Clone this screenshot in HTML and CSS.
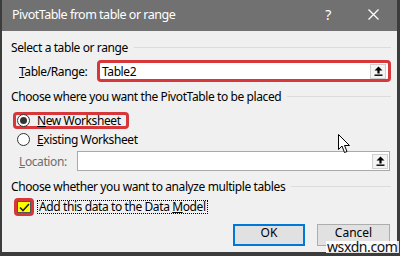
FILE: index.html
```html
<!DOCTYPE html>
<html lang="en">
  <head>
    <meta charset="UTF-8" />
    <title>PivotTable from table or range</title>
    <link rel="stylesheet" href="styles.css">
  </head>
  <body>
    <div class="dialog">
      <div class="titlebar">
        <span class="title">PivotTable from table or range</span>
        <span class="help">?</span>
        <svg class="close" width="11" height="11" viewBox="0 0 11 11">
          <path d="M0.5 0.5 L10.5 10.5 M10.5 0.5 L0.5 10.5" stroke="#fff" stroke-width="1.3" />
        </svg>
      </div>
      <div class="body">
        <div class="group-title"><span>Select a table or range</span><div class="rule"></div></div>
        <div class="row range-row">
          <label class="field-label range-label"><u>T</u>able/Range:</label>
          <div class="ref-box red-box">
            <span class="ref-text">Table2</span>
            <span class="pick-btn">
              <svg width="9" height="10" viewBox="0 0 9 10"><path d="M4.5 0.5 L8.5 4.5 L5.6 4.5 L5.6 7.5 L3.4 7.5 L3.4 4.5 L0.5 4.5 Z" fill="#000" /><rect x="0.5" y="8.5" width="8" height="1.4" fill="#000" /></svg>
            </span>
          </div>
        </div>

        <div class="group-title second"><span>Choose where you want the PivotTable to be placed</span><div class="rule"></div></div>
        <div class="row radio-row red-outline">
          <span class="radio checked"></span>
          <span><u>N</u>ew Worksheet</span>
        </div>
        <div class="row radio-row plain">
          <span class="radio"></span>
          <span><u>E</u>xisting Worksheet</span>
        </div>
        <div class="row location-row">
          <label class="field-label location-label disabled"><u>L</u>ocation:</label>
          <div class="ref-box location-box">
            <span class="pick-btn">
              <svg width="9" height="10" viewBox="0 0 9 10"><path d="M4.5 0.5 L8.5 4.5 L5.6 4.5 L5.6 7.5 L3.4 7.5 L3.4 4.5 L0.5 4.5 Z" fill="#000" /><rect x="0.5" y="8.5" width="8" height="1.4" fill="#000" /></svg>
            </span>
          </div>
        </div>

        <div class="group-title third"><span>Choose whether you want to analyze multiple tables</span><div class="rule"></div></div>
        <div class="row check-row">
          <span class="check-wrap">
            <span class="checkbox">
              <svg width="11" height="9" viewBox="0 0 11 9"><path d="M1 4.5 L4 7.5 L10 1" fill="none" stroke="#222" stroke-width="1.6" /></svg>
            </span>
          </span>
          <span class="focus-label">Add this data to the Data <u>M</u>odel</span>
        </div>

        <div class="buttons">
          <button class="btn default">OK</button>
          <button class="btn">Cancel</button>
        </div>
      </div>
    </div>

    <svg class="cursor" width="13" height="20" viewBox="0 0 13 20">
      <path d="M0.5 0.5 L0.5 15.5 L4 12 L6.5 18.5 L9 17.5 L6.5 11.5 L11.5 11.5 Z" fill="#fff" stroke="#000" stroke-width="1" />
    </svg>
    <div class="watermark">wsxdn.com</div>
  </body>
</html>
```

FILE: styles.css
```css
* {
  margin: 0;
  padding: 0;
  box-sizing: border-box;
}
body {
  width: 400px;
  height: 256px;
  background-color: #3c3c3c;
  font-family: "Noto Sans", "Open Sans", sans-serif;
  font-size: 12px;
  letter-spacing: -0.4px;
  color: #000;
  overflow: hidden;
  position: relative;
}
.dialog {
  margin: 0 3px 0 2px;
  width: 395px;
  height: 252px;
  background-color: #f0f0f0;
  display: flex;
  flex-direction: column;
}
.titlebar {
  height: 31px;
  background-color: #717171;
  color: #fff;
  display: flex;
  align-items: center;
  padding-left: 10px;
}
.title {
  font-size: 12.5px;
  letter-spacing: -0.5px;
  flex: 1;
  padding-bottom: 3px;
}
.help {
  font-size: 14px;
  margin-right: 37px;
  padding-bottom: 3px;
}
.close {
  margin-right: 18px;
  margin-bottom: 3px;
}
.body {
  padding: 0 6px 0 9px;
  flex: 1;
}
.group-title {
  display: flex;
  align-items: center;
  height: 16px;
  margin-top: 8px;
  white-space: nowrap;
}
.group-title.second {
  margin-top: 6px;
}
.group-title.third {
  margin-top: 7px;
}
.rule {
  flex: 1;
  height: 1px;
  background-color: #dcdcdc;
  margin-left: 6px;
}
.row {
  display: flex;
  align-items: center;
}
.field-label {
  padding-left: 8px;
}
.range-label {
  width: 86px;
}
.location-label {
  width: 66px;
}
.field-label.disabled {
  color: #6d6d6d;
}
.range-row {
  margin-top: 5px;
  height: 22px;
}
.ref-box {
  flex: 1;
  height: 100%;
  background-color: #fff;
  display: flex;
  align-items: center;
}
.red-box {
  border: 3px solid #d7373b;
  border-radius: 4px;
  padding: 0 2px 0 2px;
}
.ref-text {
  flex: 1;
}
.pick-btn {
  width: 16px;
  height: 15px;
  background-color: #f4f4f4;
  border: 1px solid #cfcfcf;
  display: flex;
  align-items: center;
  justify-content: center;
}
.radio-row {
  gap: 7px;
}
.red-outline {
  margin-top: 8px;
  margin-left: 2px;
  width: 116px;
  height: 17px;
  border: 3px solid #d7373b;
  border-radius: 4px;
  padding-left: 1px;
}
.plain {
  margin-top: 2px;
  height: 16px;
  padding-left: 6px;
}
.radio {
  width: 13px;
  height: 13px;
  border: 1px solid #333;
  border-radius: 50%;
  background-color: #fff;
  display: flex;
  align-items: center;
  justify-content: center;
}
.radio.checked::after {
  content: "";
  width: 7px;
  height: 7px;
  border-radius: 50%;
  background-color: #333;
}
.location-row {
  margin-top: 4px;
  height: 20px;
}
.location-box {
  border: 1px solid #a9a9a9;
  justify-content: flex-end;
  padding-right: 1px;
  margin-right: 1px;
}
.check-row {
  margin-top: 4px;
  height: 18px;
  gap: 3px;
}
.check-wrap {
  margin-left: 3px;
  width: 20px;
  height: 18px;
  border: 3px solid #d7373b;
  border-radius: 4px;
  background-color: #d7373b;
  display: flex;
  align-items: center;
  justify-content: center;
}
.checkbox {
  width: 14px;
  height: 12px;
  background-color: #ffff00;
  border: 1px solid #555;
  display: flex;
  align-items: center;
  justify-content: center;
}
.focus-label {
  border: 1px dotted #000;
  padding: 0 1px;
  line-height: 12px;
}
.buttons {
  display: flex;
  justify-content: flex-end;
  gap: 12px;
  margin-top: 8px;
  padding-right: 1px;
}
.btn {
  width: 73px;
  height: 22px;
  background-color: #e1e1e1;
  border: 1px solid #adadad;
  font-family: "Noto Sans", "Open Sans", sans-serif;
  font-size: 12px;
  line-height: 12px;
  padding-bottom: 4px;
  color: #000;
}
.btn.default {
  border: 2px solid #0078d7;
  width: 72px;
}
.cursor {
  position: absolute;
  left: 338px;
  top: 134px;
}
.watermark {
  position: absolute;
  left: 326px;
  top: 241px;
  padding: 0 1px;
  font-size: 14px;
  line-height: 12px;
  background-color: rgba(255, 255, 255, 0.85);
  color: #111;
}
```
